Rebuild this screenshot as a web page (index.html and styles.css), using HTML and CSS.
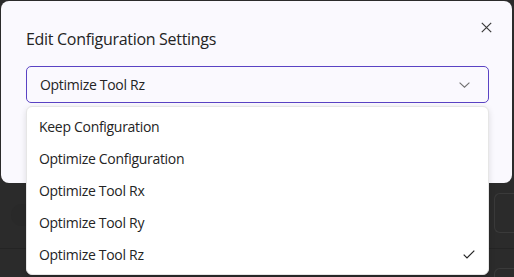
FILE: index.html
```html
<!DOCTYPE html>
<html>
<head>
<meta charset="utf-8">
<link rel="stylesheet" href="styles.css">
</head>
<body>
<div class="backdrop">
  <div class="bg-top"></div>
  <div class="bg-row">
    <div class="bg-avatar"><span class="bg-glyph"></span></div>
    <div class="bg-card"></div>
  </div>
  <div class="bg-row2">
    <div class="bg-card2"></div>
  </div>
</div>

<div class="dialog">
  <button class="close" aria-label="Close">
    <svg width="11" height="11" viewBox="0 0 11 11"><path d="M0.8 0.8 L10.2 10.2 M10.2 0.8 L0.8 10.2" stroke="#3a3a3a" stroke-width="1.2" fill="none"/></svg>
  </button>
  <h2 class="title">Edit Configuration Settings</h2>
  <div class="select">
    <span class="value">Optimize Tool Rz</span>
    <svg class="chev" width="11" height="6" viewBox="0 0 11 6"><path d="M0.6 0.6 L5.5 5.2 L10.4 0.6" stroke="#707070" stroke-width="1.1" fill="none"/></svg>
  </div>
</div>

<ul class="listbox">
  <li class="opt">Keep Configuration</li>
  <li class="opt">Optimize Configuration</li>
  <li class="opt">Optimize Tool Rx</li>
  <li class="opt">Optimize Tool Ry</li>
  <li class="opt selected">Optimize Tool Rz
    <svg class="check" width="12" height="9" viewBox="0 0 12 9"><path d="M0.7 4.6 L4 7.9 L11.3 0.6" stroke="#242424" stroke-width="1.2" fill="none"/></svg>
  </li>
</ul>
</body>
</html>
```

FILE: styles.css
```css
html, body {
  margin: 0;
  padding: 0;
  width: 514px;
  height: 277px;
  overflow: hidden;
  background: #2b2b2b;
  font-family: "Segoe UI", "Open Sans", "Noto Sans", sans-serif;
  color: #242424;
}

.backdrop {
  display: flex;
  flex-direction: column;
  height: 277px;
}
.bg-top {
  height: 193px;
  flex: none;
}
.bg-row {
  height: 56px;
  flex: none;
  display: flex;
  justify-content: space-between;
  align-items: flex-start;
  border-bottom: 1px solid #242424;
  box-sizing: border-box;
}
.bg-avatar {
  width: 22px;
  height: 22px;
  border-radius: 50%;
  background: #292929;
  margin: 11px 0 0 11px;
  display: flex;
  align-items: center;
  justify-content: flex-end;
}
.bg-glyph {
  width: 4px;
  height: 6px;
  border: 1px solid #3a3a3a;
  border-radius: 2px;
}
.bg-card {
  width: 20px;
  height: 40px;
  border: 1px solid #3a3a3a;
  border-right: none;
  border-radius: 6px 0 0 6px;
  box-sizing: border-box;
}
.bg-row2 {
  flex: 1;
  display: flex;
  justify-content: flex-end;
  padding-top: 19px;
}
.bg-card2 {
  width: 20px;
  height: 20px;
  border: 1px solid #3a3a3a;
  border-right: none;
  border-bottom: none;
  border-radius: 6px 0 0 0;
  box-sizing: border-box;
}

.dialog {
  position: absolute;
  left: 1px;
  top: 1px;
  width: 511px;
  height: 182px;
  box-sizing: border-box;
  background: #faf9fe;
  border-radius: 8px;
  padding: 26px 23px 0 25px;
}
.close {
  position: absolute;
  right: 19px;
  top: 19px;
  width: 14px;
  height: 14px;
  padding: 0;
  border: none;
  background: transparent;
  display: flex;
  align-items: center;
  justify-content: center;
}
.title {
  margin: 0 0 15px 0;
  font-size: 16px;
  font-weight: 400;
  line-height: 24px;
  letter-spacing: -0.3px;
  color: #242424;
}
.select {
  height: 37px;
  box-sizing: border-box;
  border: 1px solid #5a43c4;
  border-radius: 5px;
  display: flex;
  align-items: center;
  justify-content: space-between;
  padding: 0 18px 0 13px;
  font-size: 14px;
  letter-spacing: -0.3px;
  background: #faf9fe;
}
.chev {
  display: block;
}

.listbox {
  position: absolute;
  left: 26px;
  top: 106px;
  width: 463px;
  height: 169px;
  box-sizing: border-box;
  margin: 0;
  padding: 4px 0 0 0;
  list-style: none;
  background: #ffffff;
  border: 1px solid #e6e6e6;
  border-radius: 6px;
  box-shadow: 0 2px 6px rgba(0,0,0,0.12);
}
.opt {
  height: 32px;
  display: flex;
  align-items: center;
  justify-content: space-between;
  padding: 0 13px 0 12px;
  font-size: 14px;
  letter-spacing: -0.3px;
  color: #242424;
}
.opt:first-child {
  height: 31px;
}
.check {
  display: block;
}
```
